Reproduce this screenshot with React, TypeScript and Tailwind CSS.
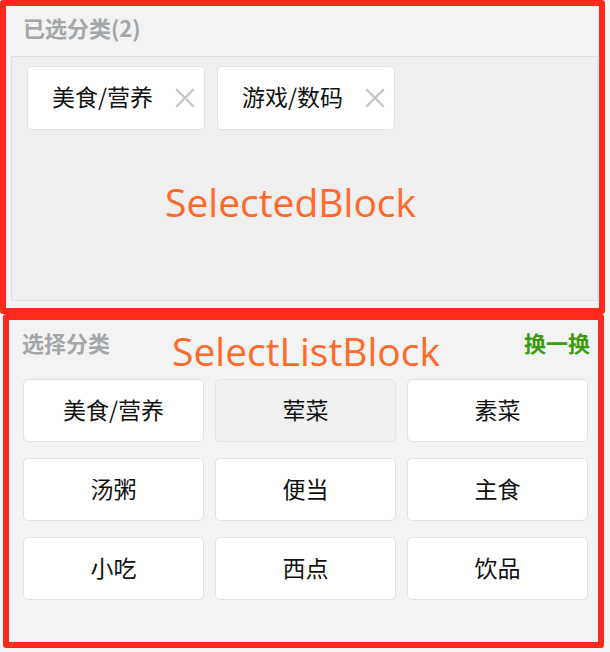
import React from "react";

const cjk = { fontFamily: '"Noto Sans CJK SC", "Noto Sans", sans-serif' };
const label = { fontFamily: '"Open Sans", "Noto Sans", sans-serif' };

function XIcon() {
  return (
    <svg width="20" height="20" viewBox="0 0 20 20" className="shrink-0">
      <path d="M2 2 L18 18 M18 2 L2 18" stroke="#c8c8c8" strokeWidth="2.4" strokeLinecap="square" />
    </svg>
  );
}

const selected = ["美食/营养", "游戏/数码"];
const options = ["美食/营养", "荤菜", "素菜", "汤粥", "便当", "主食", "小吃", "西点", "饮品"];

export default function App() {
  return (
    <div className="w-[610px] h-[652px] bg-[#f4f4f4] relative overflow-hidden" style={cjk}>
      {/* Selected block */}
      <div className="w-[605px] h-[314px] border-[6px] border-[#ff2a1d] rounded-[3px] bg-[#f3f3f3] flex flex-col relative">
        <div className="h-[50px] pl-[17px] pt-[7px] text-[22px] font-bold text-[#a3a7a9] leading-[28px]">
          已选分类(2)
        </div>
        <div className="ml-[5px] mr-[1px] h-[245px] border border-[#dedede] bg-[#efefef] pl-[15px] pt-[9px] flex gap-[12px] items-start">
          {selected.map((s) => (
            <div
              key={s}
              className="w-[178px] h-[64px] bg-white border border-[#e2e2e2] rounded-[5px] flex items-center justify-between pl-[24px] pr-[9px]"
            >
              <span className="text-[23px] text-[#111] leading-none -mt-[3px]">{s}</span>
              <XIcon />
            </div>
          ))}
        </div>
        <div
          className="absolute left-[159px] top-[176px] text-[39px] leading-none text-[#ff6a2a] whitespace-nowrap"
          style={label}
        >
          SelectedBlock
        </div>
      </div>

      {/* Select list block */}
      <div className="ml-[3px] w-[601px] h-[334px] border-[6px] border-[#ff2a1d] rounded-[3px] bg-[#f3f3f3] flex flex-col relative">
        <div className="h-[59px] flex items-start justify-between pl-[13px] pr-[8px] pt-[8px]">
          <span className="text-[22px] font-bold text-[#a3a7a9] leading-[28px]">选择分类</span>
          <span className="text-[22px] font-bold text-[#3a9b0c] leading-[28px]">换一换</span>
        </div>
        <div className="grid grid-cols-3 gap-x-[11px] gap-y-[16px] pl-[14px] pr-[10px]">
          {options.map((o, i) => (
            <div
              key={o + i}
              className={
                "h-[63px] border border-[#e2e2e2] rounded-[5px] flex items-center justify-center text-[23px] text-[#111] leading-none " +
                (i === 1 ? "bg-[#f0f0f0]" : "bg-white")
              }
            >
              <span className="-mt-[2px]">{o}</span>
            </div>
          ))}
        </div>
        <div
          className="absolute left-[163px] top-[11px] text-[39px] leading-none text-[#ff6a2a] whitespace-nowrap"
          style={label}
        >
          SelectListBlock
        </div>
      </div>
    </div>
  );
}
